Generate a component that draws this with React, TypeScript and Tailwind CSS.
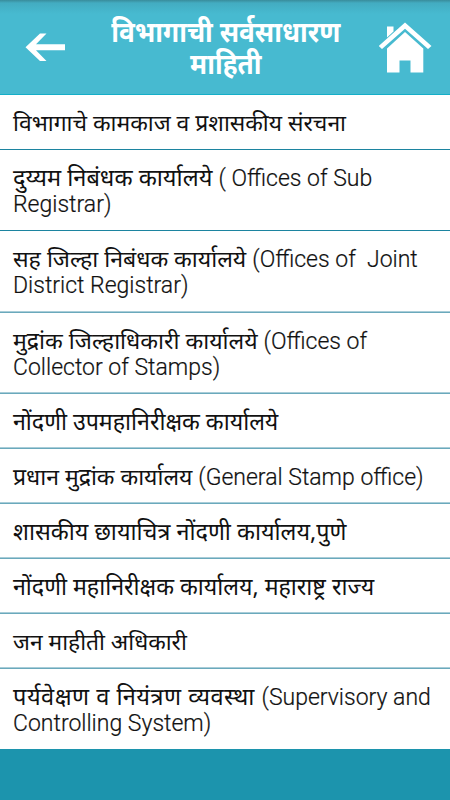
interface Run {
  text: string;
  className: string;
}

interface Office {
  id: number;
  lines: Run[][];
  className: string;
}

const hi = "font-['Noto_Sans'] leading-none";
const en = "font-['Roboto'] font-light text-[23px] leading-none [-webkit-text-stroke:0.2px_#111]";

const offices: Office[] = [
  {
    id: 1,
    className: 'h-[55px] border-b',
    lines: [[{ text: 'विभागाचे कामकाज व प्रशासकीय संरचना', className: `${hi} text-[22.9px]` }]],
  },
  {
    id: 2,
    className: 'h-[81px] border-b',
    lines: [
      [
        { text: 'दुय्यम निबंधक कार्यालये ', className: `${hi} text-[23.6px]` },
        { text: '( Offices of Sub', className: en },
      ],
      [{ text: 'Registrar)', className: en }],
    ],
  },
  {
    id: 3,
    className: 'h-[82px] border-b',
    lines: [
      [
        { text: 'सह जिल्हा निबंधक कार्यालये ', className: `${hi} text-[23.1px]` },
        { text: '(Offices of  Joint', className: en },
      ],
      [{ text: 'District Registrar)', className: en }],
    ],
  },
  {
    id: 4,
    className: 'h-[81px] border-b',
    lines: [
      [
        { text: 'मुद्रांक जिल्हाधिकारी कार्यालये ', className: `${hi} text-[23.1px]` },
        { text: '(Offices of', className: en },
      ],
      [{ text: 'Collector of Stamps)', className: en }],
    ],
  },
  {
    id: 5,
    className: 'h-[55px] border-b',
    lines: [[{ text: 'नोंदणी उपमहानिरीक्षक कार्यालये', className: `${hi} text-[23.2px]` }]],
  },
  {
    id: 6,
    className: 'h-[55px] border-b',
    lines: [
      [
        { text: 'प्रधान मुद्रांक कार्यालय ', className: `${hi} text-[23px]` },
        { text: '(General Stamp office)', className: en },
      ],
    ],
  },
  {
    id: 7,
    className: 'h-[55px] border-b',
    lines: [[{ text: 'शासकीय छायाचित्र नोंदणी कार्यालय,पुणे', className: `${hi} text-[23.4px]` }]],
  },
  {
    id: 8,
    className: 'h-[55px] border-b',
    lines: [[{ text: 'नोंदणी महानिरीक्षक कार्यालय, महाराष्ट्र राज्य', className: `${hi} text-[23.2px]` }]],
  },
  {
    id: 9,
    className: 'h-[55px] border-b',
    lines: [[{ text: 'जन माहीती अधिकारी', className: `${hi} text-[22.8px]` }]],
  },
  {
    id: 10,
    className: 'h-[80px]',
    lines: [
      [
        { text: 'पर्यवेक्षण व नियंत्रण व्यवस्था ', className: `${hi} text-[23.6px] tracking-[0.5px]` },
        { text: '(Supervisory and', className: en },
      ],
      [{ text: 'Controlling System)', className: en }],
    ],
  },
];

function dividerClass(id: number) {
  if (id < 3) return 'border-[#1c84a0]';
  if (id < 10) return 'border-[#6aa9bc] shadow-[inset_0_-1px_0_#a9cdd8]';
  return '';
}

function Header() {
  return (
    <header className="flex h-[95px] shrink-0 items-start justify-between border-b border-[#14afc8] bg-[#47bad0] bg-[linear-gradient(to_bottom,#398c9b_0,#43acc1_3px,#47bad0_14px)] text-white">
      <button type="button" aria-label="Back" className="mt-[33px] ml-[25px]">
        <svg className="h-7 w-10" viewBox="0 0 40 28" fill="currentColor">
          <path d="M0.5 14.3L15 0.5H21.5L11 11.3H40V17.3H11L21.5 28H15Z" />
        </svg>
      </button>
      <h1 className="mt-[15px] ml-[7px] scale-x-[0.89] text-center font-['Noto_Sans'] text-[29.5px] leading-8 font-bold whitespace-nowrap">
        विभागाची सर्वसाधारण
        <br />
        माहिती
      </h1>
      <button type="button" aria-label="Home" className="mt-[22px] mr-[18px]">
        <svg className="h-[51px] w-[53px]" viewBox="0 0 53 51" fill="currentColor">
          <path d="M8 4.5H14.5V9.5L8 15.5Z" />
          <path d="M26 0.5L52.5 24L49 27L26 6.8L3 27L-0.2 24Z" />
          <path d="M26 10L44.3 26.5V50.5H31.5V38.5H20.5V50.5H8V26.5Z" />
        </svg>
      </button>
    </header>
  );
}

export default function App() {
  return (
    <div className="flex h-[800px] w-[450px] flex-col overflow-hidden bg-[#1c94ad]">
      <Header />
      <ul className="bg-white text-[#111]">
        {offices.map((office) => (
          <li key={office.id} className={`pt-4 pl-[13px] ${office.className} ${dividerClass(office.id)}`}>
            {office.lines.map((line, i) => (
              <div key={i} className="h-[26.4px] font-['Roboto'] text-[23px] leading-[26.4px] whitespace-pre">
                {line.map((run) => (
                  <span key={run.text} className={run.className}>
                    {run.text}
                  </span>
                ))}
              </div>
            ))}
          </li>
        ))}
      </ul>
    </div>
  );
}
